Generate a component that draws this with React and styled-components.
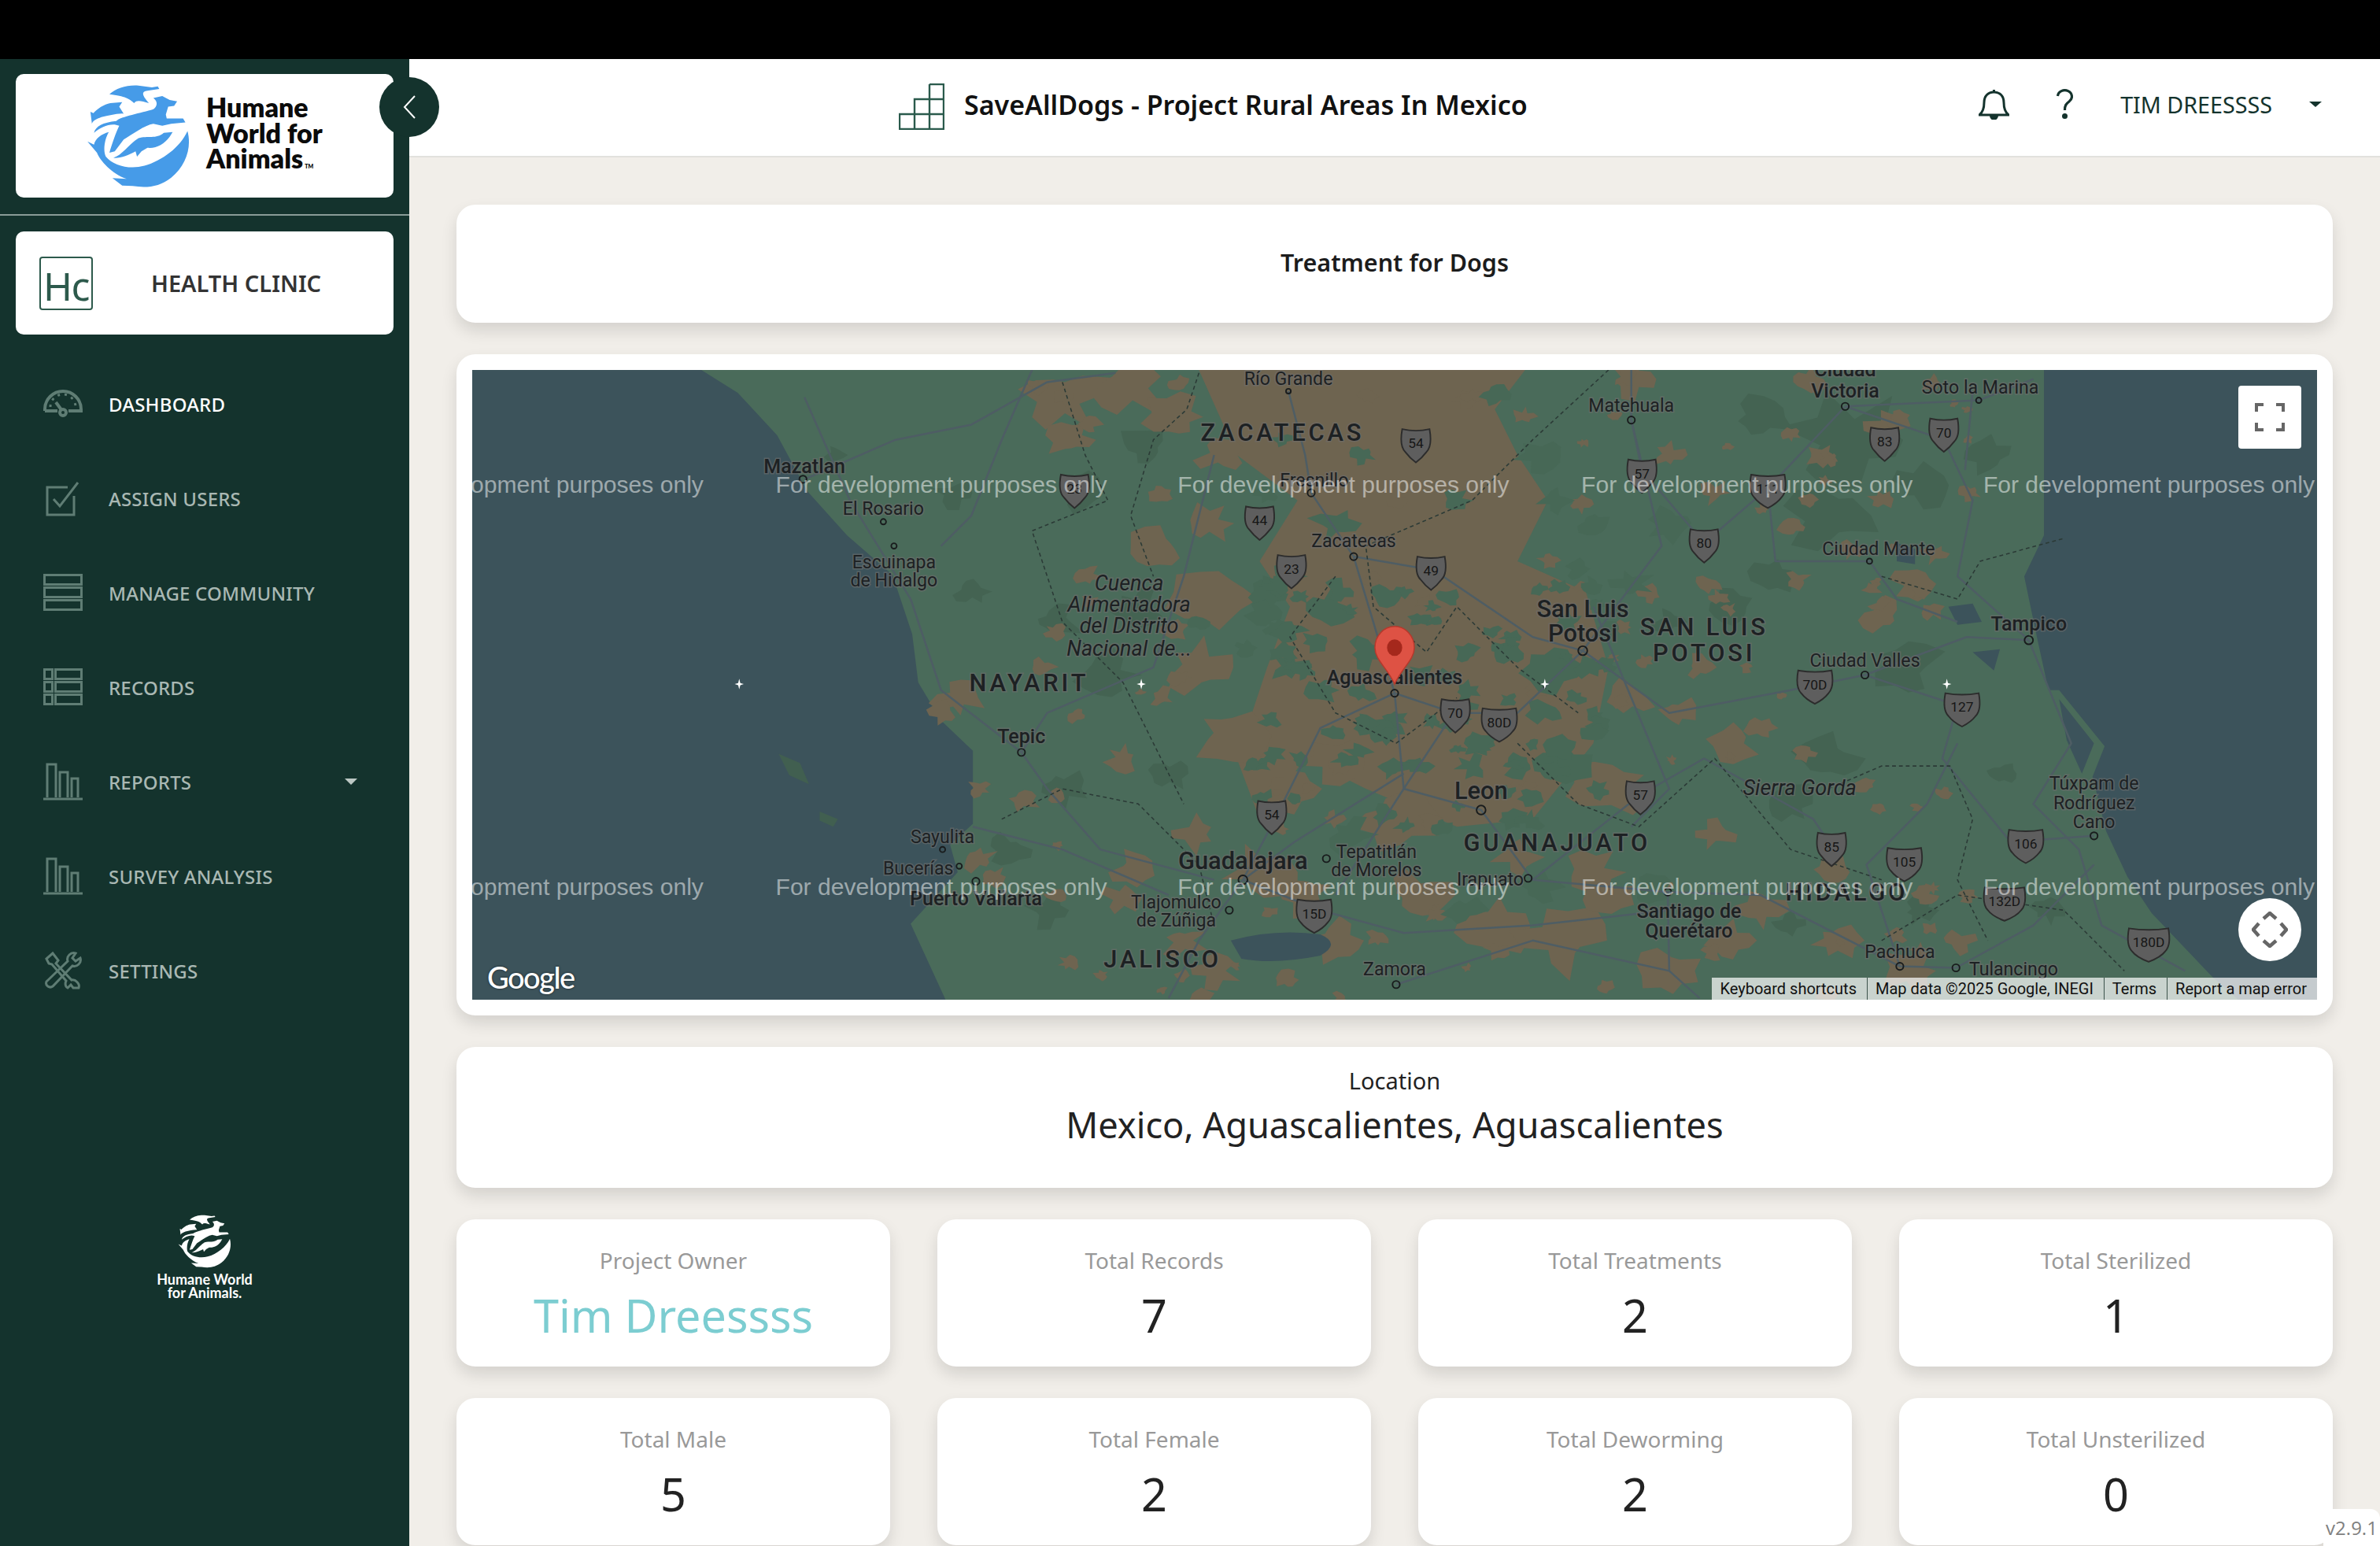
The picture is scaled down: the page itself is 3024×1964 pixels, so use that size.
import React from 'react';
import styled, { createGlobalStyle } from 'styled-components';

const GlobalStyle = createGlobalStyle`
  html, body {
    margin: 0;
    padding: 0;
    height: 100%;
    overflow: hidden;
    background: #000;
    font-family: 'Noto Sans', 'Open Sans', sans-serif;
  }
  * { box-sizing: border-box; }
`;

const Page = styled.div`
  height: 1964px;
  padding-top: 75px;
  background: #000;
  position: relative;
  overflow: hidden;
`;

const Shell = styled.div`
  display: flex;
  height: 1889px;
  background: #f1eee9;
`;

const Sidebar = styled.aside`
  position: relative;
  z-index: 2;
  flex: 0 0 520px;
  display: flex;
  flex-direction: column;
  background: #14332d;
`;

const LogoCard = styled.div`
  height: 157px;
  margin: 19px 20px 21px;
  padding-left: 90px;
  display: flex;
  align-items: center;
  gap: 20px;
  background: #fff;
  border-radius: 10px;
`;

const LogoWords = styled.div`
  margin-top: 3px;
  font-family: 'Lato', 'Inter', sans-serif;
  font-size: 34px;
  line-height: 32.5px;
  font-weight: 800;
  color: #0b0b0b;
`;

const LogoTm = styled.span`
  margin-left: 2px;
  font-size: 7px;
`;

const Divider = styled.div`
  height: 2px;
  background: #8a9c97;
`;

const ClinicCard = styled.div`
  height: 131px;
  margin: 20px 20px 28px;
  padding-left: 30px;
  display: flex;
  align-items: center;
  background: #fff;
  border-radius: 10px;
`;

const ClinicBadge = styled.div`
  width: 68px;
  height: 68px;
  border: 2px solid #2d5a4c;
  border-radius: 4px;
  display: flex;
  align-items: flex-end;
  justify-content: center;
  font-size: 50px;
  line-height: 58px;
  font-weight: 400;
  color: #2d5a4c;
  letter-spacing: -1.5px;
`;

const ClinicName = styled.div`
  margin-left: 74px;
  font-size: 29px;
  font-weight: 600;
  color: #333;
`;

const Nav = styled.nav`
  display: flex;
  flex-direction: column;
`;

const NavRow = styled.div`
  height: 120px;
  padding: 0 66px 0 55px;
  display: flex;
  align-items: center;
  font-size: 24px;
  font-weight: 500;
  letter-spacing: 0.2px;
  color: ${(p) => (p.$active ? '#ffffff' : '#a9b8b3')};
`;

const NavIcon = styled.svg`
  flex: 0 0 50px;
  width: 50px;
  height: 50px;
  margin-right: 33px;
  fill: none;
  stroke: #5f7d74;
  stroke-width: 3;
`;

const NavCaret = styled.span`
  margin-left: auto;
  border-left: 8px solid transparent;
  border-right: 8px solid transparent;
  border-top: 8px solid #bcc8c4;
`;

const FooterLogo = styled.div`
  margin-top: 250px;
  display: flex;
  flex-direction: column;
  align-items: center;
  font-family: 'Lato', 'Inter', sans-serif;
  font-size: 18px;
  line-height: 17px;
  font-weight: 700;
  color: #fff;
  text-align: center;
`;

const FooterWords = styled.div`
  margin-top: 6px;
`;

const CollapseButton = styled.button`
  position: absolute;
  top: 23px;
  right: -38px;
  width: 76px;
  height: 76px;
  padding: 0;
  border: 0;
  border-radius: 50%;
  background: #14332d;
  display: flex;
  align-items: center;
  justify-content: center;
`;

const Main = styled.main`
  flex: 1;
  min-width: 0;
  display: flex;
  flex-direction: column;
  overflow: hidden;
`;

const Header = styled.header`
  flex: 0 0 125px;
  padding: 0 74px 8px 622px;
  display: flex;
  align-items: center;
  background: #fff;
  border-bottom: 2px solid #e2e1dd;
`;

const ProjectIcon = styled.svg`
  flex: none;
  margin-top: 6px;
  fill: none;
  stroke: #2a5a4c;
  stroke-width: 2.4;
`;

const ProjectTitle = styled.h1`
  margin: 0 0 0 25px;
  font-size: 34px;
  font-weight: 600;
  color: #111;
  white-space: nowrap;
`;

const HeaderActions = styled.div`
  margin-left: auto;
  display: flex;
  align-items: center;
  color: #14332d;
`;

const HelpIcon = styled.svg`
  margin-left: 60px;
  fill: none;
  stroke: #14332d;
  stroke-width: 3.2;
`;

const UserName = styled.span`
  margin-left: 60px;
  font-size: 28.7px;
  color: #14332d;
`;

const UserCaret = styled.span`
  margin-left: 47px;
  border-left: 8px solid transparent;
  border-right: 8px solid transparent;
  border-top: 7px solid #14332d;
`;

const Content = styled.div`
  flex: 1;
  padding: 60px 60px 0;
  display: flex;
  flex-direction: column;
  gap: 40px;
`;

const Card = styled.section`
  background: #fff;
  border-radius: 24px;
  box-shadow: 0 10px 20px rgba(0, 0, 0, 0.12);
`;

const TitleCard = styled(Card)`
  flex: 0 0 150px;
  padding-bottom: 4px;
  display: flex;
  align-items: center;
  justify-content: center;
  font-size: 30.5px;
  font-weight: 600;
  color: #1c1c1c;
`;

const MapCard = styled(Card)`
  flex: 0 0 840px;
  padding: 20px;
`;

const MapFrame = styled.div`
  position: relative;
  height: 800px;
  overflow: hidden;
  background: #3c535b;
`;

const MapSvg = styled.svg`
  display: block;
  width: 100%;
  height: 100%;
`;

const PlaceText = styled.text`
  font-family: 'Roboto', 'Liberation Sans', sans-serif;
  font-size: ${(p) => p.$size}px;
  font-weight: ${(p) => p.$weight};
  font-style: ${(p) => (p.$italic ? 'italic' : 'normal')};
  letter-spacing: ${(p) => p.$spacing}px;
  fill: #1d2123;
  stroke: rgba(110, 110, 110, 0.6);
  stroke-width: 1.6px;
  paint-order: stroke;
  text-anchor: middle;
  dominant-baseline: middle;
`;

const Watermark = styled.text`
  font-family: 'Liberation Sans', Arial, sans-serif;
  font-size: 15.6px;
  fill: rgba(255, 255, 255, 0.5);
  dominant-baseline: middle;
`;

const ShieldText = styled.text`
  font-family: 'Roboto', 'Liberation Sans', sans-serif;
  font-size: 9px;
  fill: #161616;
  text-anchor: middle;
  dominant-baseline: middle;
`;

const MapButton = styled.div`
  position: absolute;
  right: 20px;
  width: 80px;
  height: 80px;
  background: #fff;
  display: flex;
  align-items: center;
  justify-content: center;
  color: #666;
`;

const FullscreenButton = styled(MapButton)`
  top: 20px;
  border-radius: 4px;
`;

const PanButton = styled(MapButton)`
  bottom: 49px;
  border-radius: 50%;
`;

const GoogleMark = styled.div`
  position: absolute;
  left: 19px;
  bottom: 6px;
  font-family: 'Lato', 'Open Sans', sans-serif;
  font-size: 38px;
  font-weight: 500;
  letter-spacing: -1.5px;
  color: #fff;
  text-shadow: 0 0 3px rgba(0, 0, 0, 0.6);
`;

const Attribution = styled.div`
  position: absolute;
  right: 0;
  bottom: 0;
  height: 28px;
  display: flex;
  background: rgba(255, 255, 255, 0.7);
  font-family: 'Roboto', 'Liberation Sans', sans-serif;
  font-size: 20px;
  line-height: 28px;
  color: #111;
`;

const AttributionItem = styled.span`
  padding: 0 13px 0 10px;
  white-space: nowrap;
  & + & {
    border-left: 1.5px solid #3c534b;
  }
`;

const LocationCard = styled(Card)`
  flex: 0 0 179px;
  padding-top: 23px;
  text-align: center;
`;

const LocationLabel = styled.div`
  font-size: 29px;
  line-height: 40px;
  color: #222;
`;

const LocationValue = styled.div`
  margin-top: 4px;
  font-size: 45.2px;
  line-height: 64px;
  color: #222;
`;

const StatGrid = styled.div`
  display: grid;
  grid-template-columns: repeat(4, 1fr);
  grid-auto-rows: 187px;
  column-gap: 60px;
  row-gap: 40px;
`;

const StatCard = styled(Card)`
  padding-top: 32px;
  text-align: center;
`;

const StatLabel = styled.div`
  font-size: 28px;
  line-height: 40px;
  color: #999;
`;

const StatValue = styled.div`
  margin-top: 12px;
  font-size: 57.5px;
  line-height: 76px;
  color: ${(p) => (p.$accent ? '#7ccdd1' : '#222')};
`;

const VersionTag = styled.div`
  position: absolute;
  right: 0;
  bottom: 0;
  z-index: 3;
  width: 72px;
  height: 47px;
  padding-top: 9px;
  text-align: center;
  background: #fff;
  border-top-left-radius: 12px;
  border-top-right-radius: 12px;
  font-family: 'Open Sans', 'Noto Sans', sans-serif;
  font-size: 24px;
  line-height: 30px;
  color: #808080;
`;

const LogoMark = styled.svg`
  flex: none;
`;

// map data, in a 1216 x 415 space
const BROWN = [
  [700, 262, 26], [745, 256, 22], [775, 275, 18], [705, 290, 14], [762, 362, 16], [796, 345, 14], [805, 300, 14],
  [631, 460, 14], [622, 470, 9], [645, 520, 7], [674, 528, 9], [740, 500, 10], [786, 550, 14], [747, 572, 14],
  [740, 592, 12], [645, 566, 10], [655, 578, 8], [800, 395, 24], [790, 440, 20], [810, 485, 22], [775, 415, 8],
  [765, 460, 8], [830, 575, 20], [780, 620, 13], [800, 640, 14], [860, 590, 16], [880, 620, 18], [935, 590, 20],
  [985, 610, 22], [1030, 620, 26], [1060, 590, 14], [1100, 640, 18], [1140, 620, 14], [1160, 600, 14], [1130, 550, 12],
  [1105, 470, 12], [1140, 490, 15], [1120, 440, 10], [1075, 460, 16], [1060, 520, 24], [1210, 620, 16], [1260, 640, 18],
  [1290, 620, 10], [1205, 575, 12], [1160, 480, 9], [1125, 385, 8], [1200, 300, 9], [1245, 281, 13], [1262, 385, 14],
  [1240, 406, 14], [1275, 365, 8], [1298, 325, 7], [1192, 250, 10], [1075, 250, 14], [1100, 300, 10], [1130, 325, 9],
  [1050, 575, 16], [1000, 565, 14], [920, 540, 22], [880, 500, 20], [850, 520, 18],
];
const GREEN = [
  [880, 345, 14], [898, 300, 8], [875, 400, 14], [900, 430, 12], [850, 440, 12], [850, 380, 10], [960, 330, 8],
  [1025, 330, 10], [985, 260, 8], [1015, 300, 14], [1022, 440, 20], [970, 505, 9], [935, 505, 8], [995, 420, 6],
  [915, 480, 10], [890, 550, 14], [830, 505, 6], [950, 545, 7], [1030, 505, 16], [965, 600, 12], [835, 325, 7],
  [790, 410, 7], [845, 290, 6], [925, 390, 5], [1050, 345, 10], [1040, 375, 8], [1060, 415, 7], [1075, 385, 12],
  [1100, 345, 14], [1015, 585, 12], [1090, 585, 12],
];
const FOREST = [
  [1220, 290, 34], [1210, 340, 28], [1160, 275, 18], [1265, 320, 18], [1255, 440, 22], [1205, 500, 22], [1180, 530, 16],
  [755, 295, 16], [715, 325, 16], [730, 445, 18], [750, 400, 14], [695, 410, 16], [700, 520, 14], [640, 390, 10],
  [630, 325, 12], [770, 510, 12], [1140, 400, 14], [1100, 410, 10], [1310, 300, 14], [1350, 600, 10], [1180, 610, 10],
  [1265, 600, 10], [1320, 510, 8], [1170, 380, 14], [550, 300, 6], [665, 560, 12], [690, 600, 14],
];
const ROADS = [
  'M530 262L560 330L600 395L620 455L673 496L690 520L725 560L800 580',
  'M680 244L660 290L640 340L620 360',
  'M530 316L590 290L640 280L690 252L735 246',
  'M849 258L860 300L864 325L892 367L919 457L925 520L976 534L1010 580L1099 588L1160 590L1252 637',
  'M892 367L945 376L1010 420L1043 429L1100 470L1180 455L1229 445L1296 420L1337 422',
  'M1043 429L1000 470L958 470L919 457',
  'M1075 277L1095 360L1043 429',
  'M1075 244L1075 277L1082 310L1123 358L1165 322L1216 268',
  'M1216 268L1281 290L1300 330L1290 380L1337 422',
  'M1216 268L1304 264L1340 250',
  'M1165 322L1170 370L1232 370L1250 395L1290 410',
  'M1229 445L1290 465L1280 500L1325 555L1380 551',
  'M1337 422L1365 490L1340 530L1370 560L1385 610L1440 640',
  'M1290 490L1270 530L1230 570L1252 637L1289 638L1340 610L1380 570',
  'M819 580L853 555L925 510',
  'M819 580L870 600L925 615L1010 610L1100 600',
  'M819 580L790 620L770 658',
  'M919 457L870 480L840 540L819 580',
  'M958 470L925 520L880 590',
  'M1010 580L1081 524L1123 500L1195 540L1207 558',
  'M1099 588L1100 640L1120 658',
  'M1050 400L1100 520L1075 545',
  'M920 649L1010 620L1100 640',
  'M673 496L690 470L760 440L780 380L800 300',
  'M641 545L700 560L770 590',
  'M1295 310L1300 258',
];
const BORDERS = [
  'M790 246L782 270L760 290L745 340L760 380',
  'M700 252L715 300L730 330L680 350L700 410L740 450L765 500L780 530',
  'M660 540L700 520L750 530L790 570L800 610',
  'M1060 244L1010 290L970 330L900 360L905 400L940 430L960 400L1000 440L1040 470',
  'M880 380L850 420L880 470L920 490L960 460',
  'M1000 490L1040 530L1080 545L1130 500L1180 560L1240 580',
  'M1240 380L1290 395L1305 370L1360 355',
  'M1205 520L1240 505L1285 505L1300 540L1290 580L1310 620',
  'M1240 620L1290 590L1360 600L1400 640',
];
const SHIELDS = [
  ['23', 708, 322], ['54', 933, 292], ['44', 830, 343], ['23', 851, 375], ['49', 943, 376], ['57', 1082, 312],
  ['111', 1165, 322], ['80', 1123, 358], ['83', 1242, 291], ['70', 1281, 285], ['70D', 1196, 451], ['127', 1293, 466],
  ['70', 959, 470], ['80D', 988, 476], ['57', 1081, 524], ['54', 838, 537], ['85', 1207, 558], ['105', 1255, 568],
  ['106', 1335, 556], ['15D', 866, 602], ['132D', 1321, 594], ['180D', 1416, 621],
];
const DOTS = [
  [529, 316, 2.4], [582, 344, 1.8], [589, 360, 1.8], [673, 496, 2.4], [621, 560, 1.8], [632, 571, 1.8], [643, 581, 2.4],
  [810, 600, 2.4], [849, 258, 1.6], [1075, 277, 2.4], [1216, 268, 2.4], [864, 325, 2.4], [892, 367, 2.4], [1043, 429, 3],
  [1232, 370, 1.8], [1229, 445, 2.4], [919, 457, 2.4], [976, 534, 3], [874, 566, 2.4], [819, 580, 3], [1007, 579, 2.4],
  [1099, 588, 2.4], [920, 649, 2.4], [1252, 637, 2.4], [1289, 638, 2.4], [1304, 264, 1.8], [1337, 422, 2.8], [1380, 551, 2.4],
];
const PLACES = [
  ['Río Grande', 849, 249, 12], ['Matehuala', 1075, 267, 12], ['Ciudad', 1216, 243, 13, 500], ['Victoria', 1216, 257, 13, 500],
  ['Soto la Marina', 1305, 255, 12], ['ZACATECAS', 845, 285, 16, 500, false, 2], ['Mazatlan', 530, 307, 13, 500],
  ['El Rosario', 582, 335, 12], ['Fresnillo', 866, 316, 12], ['Zacatecas', 892, 356, 12], ['Ciudad Mante', 1238, 361, 12],
  ['Escuinapa', 589, 370, 12], ['de Hidalgo', 589, 382, 12], ['Cuenca', 744, 384, 14, 400, true], ['Alimentadora', 744, 398, 14, 400, true],
  ['del Distrito', 744, 412, 14, 400, true], ['Nacional de...', 744, 427, 14, 400, true], ['San Luis', 1043, 401, 16, 500],
  ['Potosi', 1043, 417, 16, 500], ['SAN LUIS', 1123, 413, 16, 500, false, 2], ['POTOSI', 1123, 430, 16, 500, false, 2],
  ['Tampico', 1337, 411, 13, 500], ['Ciudad Valles', 1229, 435, 12], ['NAYARIT', 678, 450, 16, 500, false, 2],
  ['Aguascalientes', 919, 446, 13, 500], ['Tepic', 673, 485, 13, 500], ['Leon', 976, 521, 16, 500], ['Sierra Gorda', 1186, 519, 14, 400, true],
  ['Túxpam de', 1380, 516, 12], ['Rodríguez', 1380, 529, 12], ['Cano', 1380, 541, 12], ['Sayulita', 621, 551, 12], ['Bucerías', 605, 572, 12],
  ['Guadalajara', 819, 567, 16, 500], ['Tepatitlán', 907, 561, 12], ['de Morelos', 907, 573, 12], ['GUANAJUATO', 1026, 555, 16, 500, false, 2],
  ['Irapuato', 982, 579, 12], ['Puerto Vallarta', 643, 592, 13, 500], ['Tlajomulco', 775, 594, 12], ['de Zúñiga', 775, 606, 12],
  ['HIDALGO', 1217, 588, 16, 500, false, 2], ['Santiago de', 1113, 600, 13, 500], ['Querétaro', 1113, 613, 13, 500],
  ['JALISCO', 766, 632, 16, 500, false, 2], ['Pachuca', 1252, 627, 12], ['Tulancingo', 1327, 638, 12], ['Zamora', 919, 638, 12],
];
const WATERMARK_X = [245, 511, 776, 1042, 1307];
const SPARKLES = [487, 752, 1018, 1283];

const LAND =
  'M462 244L486 259L512 287L532 324L558 353L588 379L601 418L605 450L620 475L641 495L641 543L626 557L631 575L600 609L623 659' +
  'L1475 659L1458 644L1418 602L1402 578L1388 548L1379 512L1387 492L1357 455L1350 455L1343 423L1339 404L1334 380L1347 353L1347 244Z';
const CENTRAL_BROWN =
  'M790 244L1005 244L985 270L1000 300L1020 330L1000 370L1045 390L1060 440L1050 490L1010 540L960 545L900 520L860 500L830 540L815 500' +
  'L835 440L850 400L830 370L855 330L815 300Z';

const noise = (seed) => Math.abs(Math.sin(seed * 12.9898) * 43758.5453) % 1;

// deterministic little polygon, good enough for terrain patches
const blobPath = (cx, cy, r, seed) => {
  const points = [];
  const sides = 13;
  for (let i = 0; i < sides; i += 1) {
    const radius = r * (0.4 + noise(seed + i * 6.1) * 0.85);
    const angle = (i / sides) * Math.PI * 2;
    points.push(`${(cx + Math.cos(angle) * radius * 1.15).toFixed(1)} ${(cy + Math.sin(angle) * radius * 0.85).toFixed(1)}`);
  }
  return `M${points.join('L')}Z`;
};

// fine mottling on top of the hand placed patches
const scatter = (count, x0, x1, y0, y1, rMin, rMax, offset) =>
  Array.from({ length: count }, (_, i) => [
    x0 + noise(offset + i * 1.7) * (x1 - x0),
    y0 + noise(offset + i * 2.3 + 11) * (y1 - y0),
    rMin + noise(offset + i * 3.1 + 23) * (rMax - rMin),
  ]);

const FINE_BROWN = scatter(110, 680, 1300, 244, 659, 3, 8, 200);
const FINE_GREEN = scatter(80, 820, 1060, 380, 545, 4, 10, 500);

const Shield = ({ label, x, y }) => {
  const half = label.length > 3 ? 13 : label.length === 3 ? 11 : 9;
  return (
    <g transform={`translate(${x} ${y})`}>
      <path
        d={`M${-half} -9Q0 -7 ${half} -9Q${half + 2} 2 ${half - 2} 6Q${half - 5} 10 0 13Q${5 - half} 10 ${2 - half} 6Q${-half - 2} 2 ${-half} -9Z`}
        fill="#5e5e5e"
        stroke="#2c2c2c"
        strokeWidth="1"
      />
      <ShieldText y="1">{label}</ShieldText>
    </g>
  );
};

const MapArt = () => (
  <MapSvg viewBox="311 244 1216 415" preserveAspectRatio="none">
    <path d={LAND} fill="#4a6b5a" />
    {FOREST.map(([x, y, r], i) => (
      <path key={`f${i}`} d={blobPath(x, y, r, i + 3)} fill="#446352" />
    ))}
    <path d={CENTRAL_BROWN} fill="#6e6450" />
    {BROWN.map(([x, y, r], i) => (
      <path key={`b${i}`} d={blobPath(x, y, r, i + 40)} fill="#6e6450" />
    ))}
    {FINE_BROWN.map(([x, y, r], i) => (
      <path key={`fb${i}`} d={blobPath(x, y, r, i + 700)} fill="#6e6450" />
    ))}
    {GREEN.map(([x, y, r], i) => (
      <path key={`g${i}`} d={blobPath(x, y, r, i + 90)} fill="#476856" />
    ))}
    {FINE_GREEN.map(([x, y, r], i) => (
      <path key={`fg${i}`} d={blobPath(x, y, r, i + 900)} fill="#476856" />
    ))}
    <path d="M513 497L527 503L533 517L520 511Z" fill="#415f50" />
    <path d="M540 535L552 540L549 545L540 541Z" fill="#415f50" />
    <path d="M1357 461L1380 490L1372 510L1362 488Z" fill="#3c535b" />
    <path d="M811 620Q840 612 870 616Q884 622 870 630Q840 636 818 632Z" fill="#3c535b" />
    <path d="M1250 358L1262 362L1262 372L1250 370Z M1284 400L1300 398L1306 410L1290 412Z M1300 430L1318 428L1314 442Z" fill="#3c535b" />
    {ROADS.map((d, i) => (
      <path key={`r${i}`} d={d} fill="none" stroke="#4e5d64" strokeWidth="1.3" strokeLinejoin="round" />
    ))}
    {BORDERS.map((d, i) => (
      <path key={`d${i}`} d={d} fill="none" stroke="#2b3a36" strokeWidth="0.8" strokeDasharray="2.5 2" />
    ))}
    {SHIELDS.map(([label, x, y], i) => (
      <Shield key={`s${i}`} label={label} x={x} y={y} />
    ))}
    {DOTS.map(([x, y, r], i) => (
      <circle key={`c${i}`} cx={x} cy={y} r={r} fill="none" stroke="#191c1d" strokeWidth="1" />
    ))}
    {PLACES.map(([name, x, y, size, weight = 400, italic = false, spacing = 0]) => (
      <PlaceText key={`${name}${x}`} x={x} y={y + 1.5} $size={size} $weight={weight} $italic={italic} $spacing={spacing}>
        {name}
      </PlaceText>
    ))}
    {SPARKLES.map((x) => (
      <path key={x} d={`M${x} 447.5L${x + 0.7} 450.3L${x + 3} 451L${x + 0.7} 451.7L${x} 454.5L${x - 0.7} 451.7L${x - 3} 451L${x - 0.7} 450.3Z`} fill="#fff" />
    ))}
    <path d="M919 451C914 440 906 435 906 427A13 14 0 0 1 932 427C932 435 924 440 919 451Z" fill="#de5244" stroke="#b5392c" strokeWidth="0.8" />
    <ellipse cx="919" cy="427" rx="5" ry="5.5" fill="#a5281c" />
    {WATERMARK_X.map((x) => (
      <React.Fragment key={x}>
        <Watermark x={x} y="321">For development purposes only</Watermark>
        <Watermark x={x} y="586">For development purposes only</Watermark>
      </React.Fragment>
    ))}
  </MapSvg>
);

const AnimalLogo = ({ width, height, color }) => (
  <LogoMark width={width} height={height} viewBox="285 140 350 395" preserveAspectRatio="none" fill={color}>
    <path d="M362 178C385 155 420 142 460 145L505 152L525 148L530 158L490 165C470 168 470 180 495 212C470 205 455 198 445 212C430 195 415 185 362 178Z" />
    <path d="M298 245L308 250C320 235 345 215 365 212L405 208L395 225L410 252C385 250 360 260 335 265C318 272 305 280 303 290Z" />
    <path d="M510 192L540 185L565 200L590 205L580 222L560 225L552 255L555 270L610 270L618 285L570 290L540 298L510 290C480 295 440 330 410 350L380 395L362 400C370 370 385 320 395 298C370 285 335 300 310 325C315 300 340 285 385 280C400 262 470 250 510 235C525 222 525 205 510 192Z" />
    <path d="M375 420C405 410 425 370 460 345C490 335 520 350 545 325L575 322L565 340C545 370 520 385 490 382L470 395L455 415L450 395C425 410 400 422 375 420Z" />
    <path d="M288 358L310 370C315 345 335 330 360 322C345 350 340 395 350 415C375 450 430 465 480 450C540 430 600 380 625 318C640 380 620 450 570 495C530 530 490 535 440 527L405 525L372 497L420 500C370 480 330 430 320 400Z" />
  </LogoMark>
);

const iconPaths = {
  dashboard: (
    <>
      <path d="M2 34V32A23 23 0 0 1 48 32V34H32M18 34H2" strokeWidth="4" />
      <path d="M9 29A16 16 0 0 1 41 29" strokeWidth="3" strokeDasharray="3 6" />
      <path d="M16 23L24 34" strokeWidth="4" />
      <circle cx="25" cy="36" r="4" strokeWidth="4" />
    </>
  ),
  assign: (
    <>
      <path d="M39 22V46H5V11H31" />
      <path d="M13 26L21 35L44 5" />
    </>
  ),
  community: (
    <>
      <rect x="1.5" y="2.5" width="47" height="12" />
      <rect x="1.5" y="18.5" width="47" height="12" />
      <rect x="1.5" y="34.5" width="47" height="12" />
    </>
  ),
  records: (
    <>
      <rect x="1.5" y="2.5" width="10" height="12" />
      <rect x="15.5" y="2.5" width="33" height="12" />
      <rect x="1.5" y="18.5" width="10" height="12" />
      <rect x="15.5" y="18.5" width="33" height="12" />
      <rect x="1.5" y="34.5" width="10" height="12" />
      <rect x="15.5" y="34.5" width="33" height="12" />
    </>
  ),
  bars: (
    <>
      <path d="M0 47H50" />
      <path d="M5 45V3H16V45" />
      <path d="M21 45V13H31V45" />
      <path d="M36 45V21H44V45" />
    </>
  ),
  settings: (
    <>
      <path d="M4 10L12 3L19 12L16 16L36 37C41 36 47 42 45 47H38L35 43L31 47C27 45 28 40 29 38L11 17L7 16Z" />
      <path d="M4 39L31 13C29 7 35 1 41 3L37 9L41 13L47 9C49 15 43 21 37 19L12 45C8 48 2 44 4 39Z" />
    </>
  ),
};

const navItems = [
  { label: 'DASHBOARD', icon: 'dashboard', active: true },
  { label: 'ASSIGN USERS', icon: 'assign' },
  { label: 'MANAGE COMMUNITY', icon: 'community' },
  { label: 'RECORDS', icon: 'records' },
  { label: 'REPORTS', icon: 'bars', caret: true },
  { label: 'SURVEY ANALYSIS', icon: 'bars' },
  { label: 'SETTINGS', icon: 'settings' },
];

const stats = [
  { label: 'Project Owner', value: 'Tim Dreessss', accent: true },
  { label: 'Total Records', value: '7' },
  { label: 'Total Treatments', value: '2' },
  { label: 'Total Sterilized', value: '1' },
  { label: 'Total Male', value: '5' },
  { label: 'Total Female', value: '2' },
  { label: 'Total Deworming', value: '2' },
  { label: 'Total Unsterilized', value: '0' },
];

export default function App() {
  return (
    <Page>
      <GlobalStyle />
      <Shell>
        <Sidebar>
          <LogoCard>
            <AnimalLogo width={132} height={132} color="#469be8" />
            <LogoWords>
              Humane
              <br />
              World for
              <br />
              Animals<LogoTm>TM</LogoTm>
            </LogoWords>
          </LogoCard>
          <Divider />
          <ClinicCard>
            <ClinicBadge>Hc</ClinicBadge>
            <ClinicName>HEALTH CLINIC</ClinicName>
          </ClinicCard>
          <Nav>
            {navItems.map((item) => (
              <NavRow key={item.label} $active={item.active}>
                <NavIcon viewBox="0 0 50 50">{iconPaths[item.icon]}</NavIcon>
                {item.label}
                {item.caret && <NavCaret />}
              </NavRow>
            ))}
          </Nav>
          <FooterLogo>
            <AnimalLogo width={68} height={68} color="#fff" />
            <FooterWords>
              Humane World
              <br />
              for Animals.
            </FooterWords>
          </FooterLogo>
          <CollapseButton aria-label="Collapse">
            <svg width="16" height="30" viewBox="0 0 16 30" fill="none" stroke="#fff" strokeWidth="2">
              <path d="M15 1L2 15L15 29" />
            </svg>
          </CollapseButton>
        </Sidebar>
        <Main>
          <Header>
            <ProjectIcon width="58" height="59" viewBox="0 0 58 59">
              <path d="M39 1H57V58H1V39H57M20 58V20H57M39 58V1" />
            </ProjectIcon>
            <ProjectTitle>SaveAllDogs - Project Rural Areas In Mexico</ProjectTitle>
            <HeaderActions>
              <svg width="39" height="39" viewBox="0 0 39 39" fill="none" stroke="#14332d" strokeWidth="3">
                <path d="M1 33H38C33 29 32 24 32 17C32 9 27 4 19.5 4C12 4 7 9 7 17C7 24 6 29 1 33Z" />
                <path d="M19.5 1V4" />
                <path d="M15.5 34A4 4 0 0 0 23.5 34Z" fill="#14332d" />
              </svg>
              <HelpIcon width="21" height="39" viewBox="0 0 21 39">
                <path d="M1.5 9A9 8 0 1 1 16 16C12 19 10.5 21 10.5 27" />
                <circle cx="10.5" cy="34.5" r="3.5" fill="#14332d" stroke="none" />
              </HelpIcon>
              <UserName>TIM DREESSSS</UserName>
              <UserCaret />
            </HeaderActions>
          </Header>
          <Content>
            <TitleCard>Treatment for Dogs</TitleCard>
            <MapCard>
              <MapFrame>
                <MapArt />
                <FullscreenButton>
                  <svg width="38" height="36" viewBox="0 0 38 36" fill="none" stroke="#666" strokeWidth="4">
                    <path d="M2 11V2H11M27 2H36V11M36 25V34H27M11 34H2V25" />
                  </svg>
                </FullscreenButton>
                <PanButton>
                  <svg width="46" height="46" viewBox="0 0 46 46" fill="none" stroke="#666" strokeWidth="4.5">
                    <path d="M15 9L23 2L31 9M15 37L23 44L31 37M9 15L2 23L9 31M37 15L44 23L37 31" />
                  </svg>
                </PanButton>
                <GoogleMark>Google</GoogleMark>
                <Attribution>
                  <AttributionItem>Keyboard shortcuts</AttributionItem>
                  <AttributionItem>Map data ©2025 Google, INEGI</AttributionItem>
                  <AttributionItem>Terms</AttributionItem>
                  <AttributionItem>Report a map error</AttributionItem>
                </Attribution>
              </MapFrame>
            </MapCard>
            <LocationCard>
              <LocationLabel>Location</LocationLabel>
              <LocationValue>Mexico, Aguascalientes, Aguascalientes</LocationValue>
            </LocationCard>
            <StatGrid>
              {stats.map((stat) => (
                <StatCard key={stat.label}>
                  <StatLabel>{stat.label}</StatLabel>
                  <StatValue $accent={stat.accent}>{stat.value}</StatValue>
                </StatCard>
              ))}
            </StatGrid>
          </Content>
        </Main>
      </Shell>
      <VersionTag>v2.9.1</VersionTag>
    </Page>
  );
}
